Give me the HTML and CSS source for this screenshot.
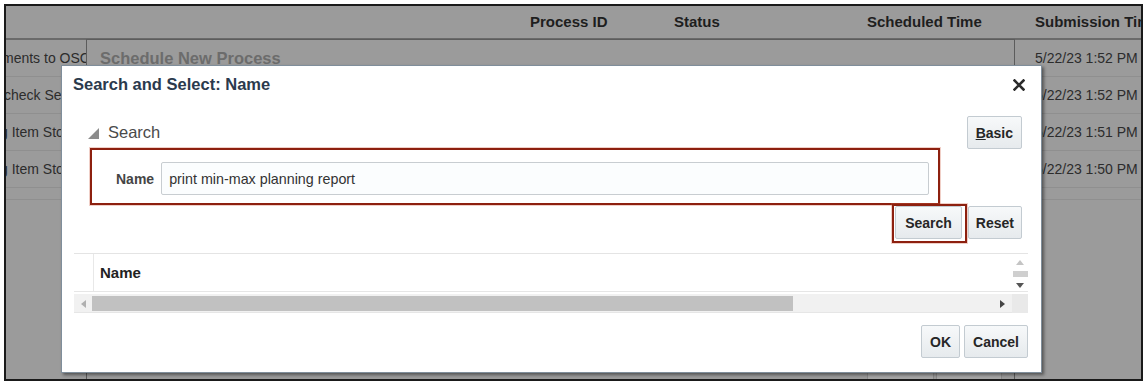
FILE: index.html
```html
<!DOCTYPE html>
<html lang="en">
<head>
  <meta charset="UTF-8" />
  <title>Search and Select: Name</title>
  <link rel="stylesheet" href="styles.css">
</head>
<body>
  <div class="frame">
    <div class="bg-table">
      <div class="bg-head">
        <span></span>
        <span>Process ID</span>
        <span>Status</span>
        <span>Scheduled Time</span>
        <span>Submission Time</span>
      </div>
      <div class="bg-row">
        <span class="cut cut-m">ments to OSC Cloud</span><span></span><span></span><span></span>
        <span>5/22/23 1:52 PM</span>
      </div>
      <div class="bg-row">
        <span class="cut cut-c">check Security Report</span><span></span><span></span><span></span>
        <span>5/22/23 1:52 PM</span>
      </div>
      <div class="bg-row">
        <span class="cut cut-g">g Item Stock Report</span><span></span><span></span><span></span>
        <span>5/22/23 1:51 PM</span>
      </div>
      <div class="bg-row">
        <span class="cut cut-g">g Item Stock Report</span><span></span><span></span><span></span>
        <span>5/22/23 1:50 PM</span>
      </div>
      <div class="bg-row short"></div>
    </div>

    <!-- dialog underneath -->
    <div class="dlg-back">
      <div class="back-title">Schedule New Process</div>
      <div class="back-space"></div>
      <div class="back-foot">
        <button class="back-btn">Submit</button>
        <button class="back-btn">Cancel</button>
      </div>
    </div>

    <!-- active dialog -->
    <div class="dlg">
      <div class="dlg-title">
        <span>Search and Select: Name</span>
        <svg class="close" width="12" height="12" viewBox="0 0 12 12">
          <path d="M1.5 1.5 L10.5 10.5 M10.5 1.5 L1.5 10.5" stroke="#2b2b2b" stroke-width="2.6" stroke-linecap="square"/>
        </svg>
      </div>
      <div class="dlg-body">
        <div class="sec-head">
          <svg class="disclose" width="11" height="11" viewBox="0 0 11 11">
            <polygon points="11,0 11,11 0,11" fill="#8c8c8c"/>
          </svg>
          <span class="sec-label">Search</span>
          <button class="btn"><u>B</u>asic</button>
        </div>

        <div class="mark name-row">
          <label for="nm">Name</label>
          <input id="nm" type="text" value="print min-max planning report" />
        </div>

        <div class="search-row">
          <div class="mark mark-btn"><button class="btn">Search</button></div>
          <button class="btn reset">Reset</button>
        </div>

        <div class="results">
          <div class="res-head">
            <div class="sel-col"></div>
            <div class="name-col">Name</div>
            <div class="vscroll">
              <svg width="8" height="5" viewBox="0 0 8 5"><polygon points="4,0 8,5 0,5" fill="#c4c4c4"/></svg>
              <div class="vthumb"></div>
              <svg width="8" height="5" viewBox="0 0 8 5"><polygon points="0,0 8,0 4,5" fill="#555"/></svg>
            </div>
          </div>
          <div class="hscroll">
            <div class="arrow"><svg width="5" height="8" viewBox="0 0 5 8"><polygon points="5,0 5,8 0,4" fill="#b0b0b0"/></svg></div>
            <div class="track"><div class="hthumb"></div></div>
            <div class="arrow"><svg width="5" height="8" viewBox="0 0 5 8"><polygon points="0,0 5,4 0,8" fill="#444"/></svg></div>
            <div class="corner"></div>
          </div>
        </div>

        <div class="dlg-foot">
          <button class="btn">OK</button>
          <button class="btn">Cancel</button>
        </div>
      </div>
    </div>
  </div>
</body>
</html>
```

FILE: styles.css
```css
* { box-sizing: border-box; }
body {
  margin: 0;
  background: #fff;
  font-family: "Liberation Sans", Arial, sans-serif;
  color: #333;
}
.frame {
  margin: 4px;
  width: 1139px;
  height: 377px;
  border: 2px solid #1a1a1a;
  background: #9b9b9b;
  position: relative;
  overflow: hidden;
}

/* page behind the dialogs */
.bg-head, .bg-row {
  display: grid;
  grid-template-columns: 524px 144px 193px 168px 1fr;
  align-items: center;
  white-space: nowrap;
  overflow: hidden;
}
.bg-head {
  height: 34px;
  padding-bottom: 2px;
  border-bottom: 2px solid #6a6a6a;
  font-size: 15px;
  font-weight: bold;
  color: #1e1e1e;
}
.bg-row {
  height: 37px;
  border-bottom: 1px solid #8f8f8f;
  font-size: 14px;
  color: #2c2c2c;
}
.bg-row.short { height: 12px; }
.cut { overflow: hidden; }
.cut-m { text-indent: -4px; }
.cut-c { text-indent: -2px; }
.cut-g { text-indent: -6px; }

.dlg-back {
  position: absolute;
  left: 80px;
  top: 33px;
  width: 929px;
  height: 372px;
  border: 1px solid #5c5c5c;
  background: #9b9b9b;
  display: flex;
  flex-direction: column;
}
.back-title {
  height: 37px;
  line-height: 37px;
  padding-left: 13px;
  font-size: 16.5px;
  font-weight: bold;
  color: #6c6c6c;
}
.back-space { flex: 1; }
.back-foot {
  display: flex;
  justify-content: flex-end;
  gap: 2px;
  padding: 0 12px 8px 0;
}
.back-btn {
  height: 30px;
  padding: 0 9px;
  border: 1px solid #8a8a8a;
  background: #a6a6a6;
  font-family: inherit;
  font-size: 14px;
  font-weight: bold;
  color: #3a3a3a;
}

/* search and select dialog */
.dlg {
  position: absolute;
  left: 55px;
  top: 59px;
  width: 981px;
  height: 308px;
  background: #fff;
  border: 1px solid #7f8e9b;
  box-shadow: 2px 2px 3px rgba(0, 0, 0, 0.45);
}
.dlg-title {
  height: 37px;
  display: flex;
  justify-content: space-between;
  align-items: center;
  padding: 0 16px 0 11px;
  font-size: 16.5px;
  font-weight: bold;
  color: #2b3a4d;
}
.dlg-body {
  padding: 0 13px 0 12px;
}
.sec-head {
  margin-top: 13px;
  height: 33px;
  display: flex;
  align-items: center;
  padding: 0 6px 0 14px;
}
.disclose { margin-right: 9px; margin-top: 1px; }
.sec-label {
  flex: 1;
  font-size: 16.5px;
  color: #4a4a4a;
}
.btn {
  height: 33px;
  padding: 0 8px;
  border: 1px solid #c3cbd1;
  border-radius: 2px;
  background: linear-gradient(#f7f9fa, #e6eaed);
  font-family: inherit;
  font-size: 14px;
  font-weight: bold;
  color: #262626;
}
.mark {
  border: 2px solid #8d200f;
  box-shadow: 0 0 0 1px rgba(205, 95, 70, 0.3);
}
.name-row {
  margin: -1px 0 0 16px;
  width: 850px;
  display: flex;
  align-items: center;
  gap: 7px;
  padding: 12px 9px 8px 24px;
}
.name-row label {
  font-size: 14px;
  font-weight: bold;
  color: #454545;
}
.name-row input {
  flex: 1;
  height: 33px;
  border: 1px solid #c8cdd1;
  border-radius: 2px;
  background: #fbfdfe;
  padding: 0 7px;
  font-family: inherit;
  font-size: 14.3px;
  color: #333;
}
.search-row {
  margin-top: -1px;
  display: flex;
  justify-content: flex-end;
  align-items: flex-start;
  padding-right: 6px;
}
.mark-btn { padding: 0 3px 2px 1px; }
.mark-btn .btn { padding: 0 9px; }
.reset { margin: 2px 0 0 1px; padding: 0 7px; }

.results {
  margin-top: 10px;
  border-top: 1px solid #e4e4e4;
}
.res-head {
  display: grid;
  grid-template-columns: 20px 1fr 16px;
  height: 38px;
  border-bottom: 1px solid #e6e6e6;
}
.sel-col { border-right: 1px solid #e8e8e8; }
.name-col {
  padding-left: 6px;
  line-height: 37px;
  font-size: 15px;
  font-weight: bold;
  color: #222;
}
.vscroll {
  display: flex;
  flex-direction: column;
  align-items: center;
  padding-top: 6px;
}
.vthumb {
  width: 15px;
  height: 6px;
  margin: 6px 0;
  background: #cfcfcf;
}
.hscroll {
  margin-top: 2px;
  height: 19px;
  display: grid;
  grid-template-columns: 18px 1fr 20px 16px;
  background: #f1f1f1;
  border-bottom: 1px solid #e6e6e6;
}
.arrow {
  display: flex;
  align-items: center;
  justify-content: center;
}
.track { padding: 2px 0; }
.hthumb {
  width: 701px;
  height: 15px;
  background: #c1c1c1;
}
.corner { background: #e9e9e9; }

.dlg-foot {
  margin-top: 12px;
  display: flex;
  justify-content: flex-end;
  gap: 4px;
}
```
